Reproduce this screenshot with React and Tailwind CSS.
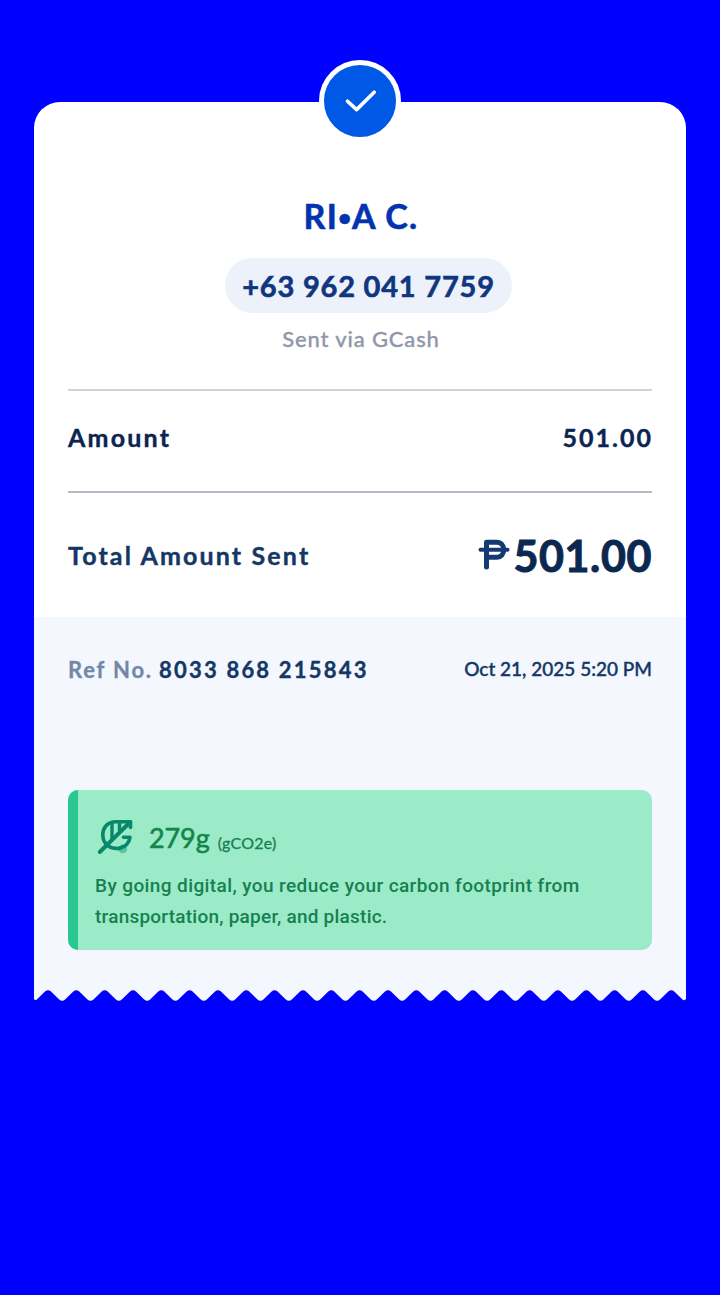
const PITCH = 28.33;

function tornEdge() {
  let d = "M0 0H652V11Q650.5 13 648.5 11.5";
  for (let i = 22; i >= 0; i--) {
    const x = 14 + i * PITCH;
    const right = x + 11.2;
    d += `L${right.toFixed(1)} 11.4L${(x + 3).toFixed(1)} 3.4Q${x.toFixed(1)} 1 ${(x - 3).toFixed(1)} 3.4L${(x - 11.2).toFixed(1)} 11.4`;
    if (i > 0) d += `Q${(x - PITCH / 2).toFixed(1)} 14.2 ${(x - PITCH + 11.2).toFixed(1)} 11.4`;
  }
  return d + "Q1 13 0 11Z";
}

function Check() {
  return (
    <svg width="32" height="24" viewBox="0 0 32 24" fill="none" className="ml-0.5">
      <path d="M2.5 12.2L11.6 20.6L29.2 3.2" stroke="#fff" strokeWidth="3.6" strokeLinecap="round" strokeLinejoin="round" />
    </svg>
  );
}

function Peso() {
  return (
    <svg width="32" height="32" viewBox="0 0 32 32" fill="none" className="mr-[3px] mb-[3px]" stroke="#143a73" strokeLinecap="round" strokeLinejoin="round">
      <path d="M8.5 29V4.2H18.5C28.2 4.2 28.2 19.2 18.5 19.2H9" strokeWidth="5" />
      <path d="M2.5 11.8H29.5" strokeWidth="4" />
    </svg>
  );
}

function Leaf() {
  return (
    <svg width="40" height="40" viewBox="0 0 40 40" fill="none" stroke="#07886b" strokeLinecap="round" strokeLinejoin="round">
      <path d="M27 28L32 31Q33 38 26 37L21 33Z" fill="#55c6a0" stroke="none" />
      <path d="M35.5 5.8H21C12 5.8 7.800 12 7.800 19C7.800 35.500 32.500 37.500 35 21.300H28.500" strokeWidth="3.600" />
      <path d="M35.500 5.800V11.500" strokeWidth="3.600" />
      <path d="M35 6.300L4.800 36" strokeWidth="4" />
      <path d="M17 7V22M24.500 7V15" strokeWidth="3.400" />
    </svg>
  );
}

export default function App() {
  return (
    <div className="flex min-h-[1295px] w-[720px] flex-col bg-[#0000ff] px-[34px] pt-[102px] font-['Lato',sans-serif] font-bold">
      <main className="relative flex flex-col rounded-t-[26px] bg-white">
        <div className="absolute -top-[42px] left-[285px] flex size-[82px] items-center justify-center rounded-full border-[5px] border-white bg-[#0058e6]">
          <Check />
        </div>
        <header className="mx-[34px] flex h-[289px] flex-col items-center border-b-2 border-[#d1d3d8] pt-[94px]">
          <h1 className="ml-0.5 h-10 text-[34px] leading-10 tracking-[1.3px] whitespace-nowrap text-[#0333ae] [-webkit-text-stroke:0.6px_#0333ae]">
            RI<span className="align-[3px] text-[23px] leading-none tracking-[0.5px]">•</span>A C.
          </h1>
          <div className="mt-[22px] ml-[17px] flex h-[55px] w-[287px] items-center justify-center rounded-full bg-[#ecf1fa] text-[29px] leading-10 tracking-[0.8px] whitespace-nowrap text-[#10367f] [-webkit-text-stroke:0.6px_#10367f]">
            +63 962 041 7759
          </div>
          <p className="mt-3 ml-0.5 text-[22px] leading-7 font-medium tracking-[0.85px] whitespace-nowrap text-[#9097a9] [-webkit-text-stroke:0.3px_#9097a9]">Sent via GCash</p>
        </header>
        <section className="mx-[34px] flex h-[102px] items-center justify-between border-b-2 border-[#b5bac7] pb-[9px] text-[25px] leading-8 tracking-[2.2px] text-[#0b2552] [-webkit-text-stroke:0.4px_#0b2552]">
          <span>Amount</span>
          <span className="-mr-px tracking-[2px]">501.00</span>
        </section>
        <section className="mx-[34px] flex h-[124px] items-center justify-between text-[25px] leading-8 tracking-[2.15px] text-[#143766] [-webkit-text-stroke:0.4px_#143766]">
          <span>Total Amount Sent</span>
          <span className="flex items-center text-[43px] leading-[52px] tracking-[0.6px] text-[#0b2850] [-webkit-text-stroke:1px_#0b2850]">
            <Peso />
            <span className="mt-px">501.00</span>
          </span>
        </section>
        <section className="flex h-[372px] flex-col bg-[#f4f8fe] px-[34px] pt-[36px]">
          <div className="flex h-8 items-center justify-between text-[22px] text-[#143766]">
            <p className="tracking-[1.8px] whitespace-nowrap">
              <span className="text-[#7188a6] [-webkit-text-stroke:0.3px_#7188a6]">Ref No. </span>
              <span className="-ml-px tracking-[2.2px] [-webkit-text-stroke:0.4px_#143766]">8033 868 215843</span>
            </p>
            <time className="text-[19px] font-medium whitespace-nowrap [-webkit-text-stroke:0.4px_#143766]">Oct 21, 2025 5:20 PM</time>
          </div>
          <aside className="mt-[105px] flex h-[160px] shrink-0 overflow-hidden rounded-[10px] bg-[#9cebc8]">
            <div className="w-[10px] shrink-0 bg-[#28c890]" />
            <div className="flex flex-col pt-[26px] pl-[17px] text-[#178052]">
              <div className="flex h-10 items-center">
                <Leaf />
                <span className="mt-1 ml-[14px] text-[27px] leading-10 font-normal tracking-[-0.1px] text-[#13864c] [-webkit-text-stroke:0.6px_#13864c]">279g</span>
                <span className="mt-[14px] ml-2 text-[16px] leading-6 font-normal tracking-[0.2px] [-webkit-text-stroke:0.3px_#178052]">(gCO2e)</span>
              </div>
              <p className="mt-[14px] font-['Roboto',sans-serif] text-[19px] leading-[31px] font-medium whitespace-nowrap">
                <span className="tracking-[0.4px]">By going digital, you reduce your carbon footprint from</span>
                <br />
                <span className="tracking-[0.23px]">transportation, paper, and plastic.</span>
              </p>
            </div>
          </aside>
        </section>
        <svg width="652" height="14" viewBox="0 0 652 14" className="-mt-px block bg-[#0000ff]">
          <path d={tornEdge()} fill="#f4f8fe" />
        </svg>
      </main>
    </div>
  );
}
